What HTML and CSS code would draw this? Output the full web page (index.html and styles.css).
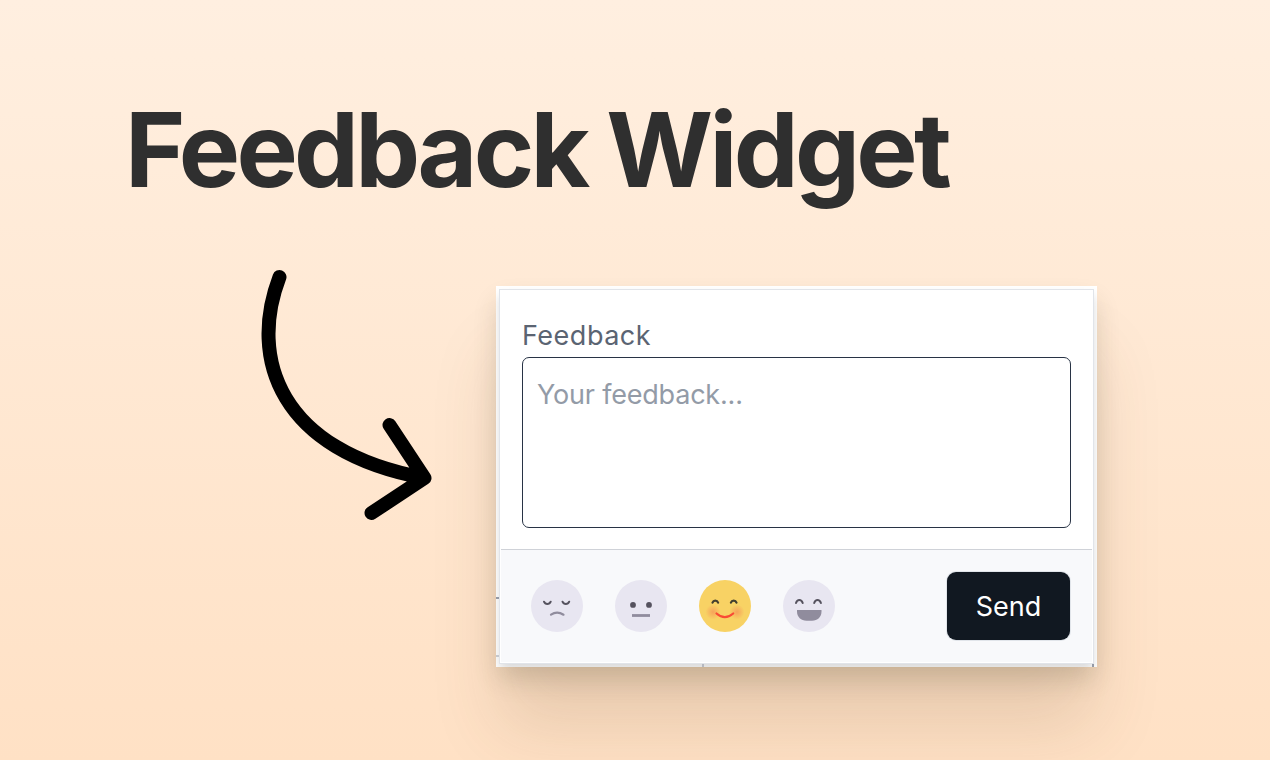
FILE: index.html
```html
<!DOCTYPE html>
<html lang="en">
<head>
<meta charset="utf-8">
<title>Feedback Widget</title>
<link rel="stylesheet" href="styles.css">
</head>
<body>
<main class="page">
  <h1 class="title"><span class="word-one">Feedback</span> <span class="word-two">Widget</span></h1>
  <div class="stage">
    <svg class="arrow" width="190" height="270" viewBox="250 260 190 270" aria-hidden="true">
      <path d="M279.500 277C248.500 358 279 451 424 478M389.500 425L424.500 478L371.500 513"/>
    </svg>
    <div class="frame">
      <i class="tick tick-a"></i><i class="tick tick-b"></i><i class="tick tick-c"></i><i class="tick tick-d"></i>
      <form class="card">
        <div class="field">
          <label class="label" for="message">Feedback</label>
          <textarea id="message" class="input" placeholder="Your feedback..."></textarea>
        </div>
        <div class="footer">
          <div class="faces">
            <svg class="face" viewBox="0 0 52 52">
              <circle cx="26" cy="26" r="26"/>
              <path class="eye" d="M13 21.700c1.300 3.100 5.400 3.100 6.700 0M31.500 21.700c1.300 3.100 5.400 3.100 6.700 0"/>
              <path class="mouth" d="M20 34.700q6-4 12.500 0"/>
            </svg>
            <svg class="face" viewBox="0 0 52 52">
              <circle cx="26" cy="26" r="26"/>
              <g class="dots"><circle cx="18" cy="24.900" r="2.900"/><circle cx="34" cy="24.900" r="2.900"/></g>
              <path class="mouth flat" d="M17 35.500h18"/>
            </svg>
            <svg class="face happy" viewBox="0 0 52 52">
              <defs><radialGradient id="blush"><stop offset="0" stop-color="#f58a55" stop-opacity=".65"/><stop offset="1" stop-color="#f58a55" stop-opacity="0"/></radialGradient></defs>
              <circle cx="26" cy="26" r="26"/>
              <circle class="blush" cx="14" cy="32" r="7.500"/><circle class="blush" cx="38" cy="32" r="7.500"/>
              <path class="eye" d="M13.500 22.600c1-2.600 4.600-2.600 5.600 0M31.900 22.600c1-2.600 4.600-2.600 5.600 0"/>
              <path class="smile" d="M17.500 33.500q8.300 7.200 16.700 0"/>
            </svg>
            <svg class="face" viewBox="0 0 52 52">
              <circle cx="26" cy="26" r="26"/>
              <path class="eye" d="M13 23c1.300-3.900 5.400-3.900 6.700 0M31.200 23c1.300-3.900 5.400-3.900 6.700 0"/>
              <path class="grin" d="M14 30h24.500v1.500c0 5.500-4 9.300-9.500 9.300h-5.500c-5.500 0-9.500-3.800-9.500-9.300z"/>
            </svg>
          </div>
          <button class="send" type="button">Send</button>
        </div>
      </form>
    </div>
  </div>
</main>
</body>
</html>
```
FILE: styles.css
```css
* { box-sizing: border-box; }
body { margin: 0; font-family: Inter, "Liberation Sans", sans-serif; }
.page {
  width: 1270px;
  height: 760px;
  overflow: hidden;
  padding: 87px 0 0 122px;
  background: linear-gradient(#ffefe0, #ffe1c5);
}
.title {
  margin: 0;
  height: 173px;
  padding-left: 3px;
  font: 700 103px/126px Inter, sans-serif;
  letter-spacing: -3.7px;
  color: #2f2f2f;
  white-space: nowrap;
}
.word-two { margin-left: -1px; }
.stage { display: flex; align-items: flex-start; padding-left: 128px; }
.arrow { flex: none; fill: none; stroke: #000; stroke-width: 14; stroke-linecap: round; stroke-linejoin: round; }
.frame {
  position: relative;
  flex: none;
  width: 601px;
  height: 381px;
  margin: 26px 0 0 56px;
  padding: 3px;
  background: #fff;
  box-shadow: 0 14px 24px -3px rgba(60, 60, 35, .2), 0 64px 64px -4px rgba(100, 70, 35, .15);
}
.card {
  position: relative;
  width: 595px;
  height: 375px;
  border: 1px solid #e1e4e9;
  background: #fff;
  box-shadow: 0 6px 10px -1px rgba(0, 0, 0, .16);
  clip-path: inset(-3px -3px -3px -3px);
}
.field { height: 259px; padding: 28px 21px 0; }
.label { display: block; height: 39px; padding-left: 1px; font-size: 27px; line-height: 36px; letter-spacing: .5px; color: #5b6472; }
.input {
  display: block;
  width: 549px;
  height: 171px;
  margin-left: 1px;
  padding: 19px 14px;
  border: 1px solid #283345;
  border-radius: 7px;
  background: #fff;
  font: 27px/36px Inter, sans-serif;
  letter-spacing: -.2px;
  resize: none;
}
.input::placeholder { color: #939ba7; opacity: 1; }
.footer {
  display: flex;
  align-items: center;
  justify-content: space-between;
  height: 113px;
  margin: 0 1px;
  padding: 0 22px 0 30px;
  border-top: 1px solid #cfd2d8;
  background: #f8f9fb;
}
.faces { display: flex; gap: 32px; }
.face { width: 52px; height: 52px; fill: #e8e6f1; stroke-linecap: round; }
.happy { fill: #f8d264; }
.happy .blush { fill: url(#blush); }
.eye { fill: none; stroke: #55525e; stroke-width: 2; }
.happy .eye { stroke: #44402f; stroke-width: 2.200; }
.dots { fill: #55525e; }
.mouth { fill: none; stroke: #908c9d; stroke-width: 2.200; }
.flat { stroke-width: 2.800; stroke-linecap: butt; }
.smile { fill: none; stroke: #f94b35; stroke-width: 2.200; }
.grin { fill: #908c9d; }
.send {
  width: 123px;
  height: 68px;
  padding: 2px 0 0;
  border: 0;
  border-radius: 9px;
  background: #111821;
  box-shadow: 0 0 0 1px #e1e5ea;
  color: #fff;
  font: 27px/66px Inter, sans-serif;
}
.tick { position: absolute; z-index: 1; background: #9499a5; }
.tick-a { left: 0; top: 311px; width: 3px; height: 2px; }
.tick-b { left: 0; top: 369px; width: 3px; height: 2px; background: #c5c8ce; }
.tick-c { left: 206px; bottom: 0; width: 2px; height: 3px; background: #b5b8c0; }
.tick-d { right: 3px; bottom: 0; width: 2px; height: 3px; }
```
